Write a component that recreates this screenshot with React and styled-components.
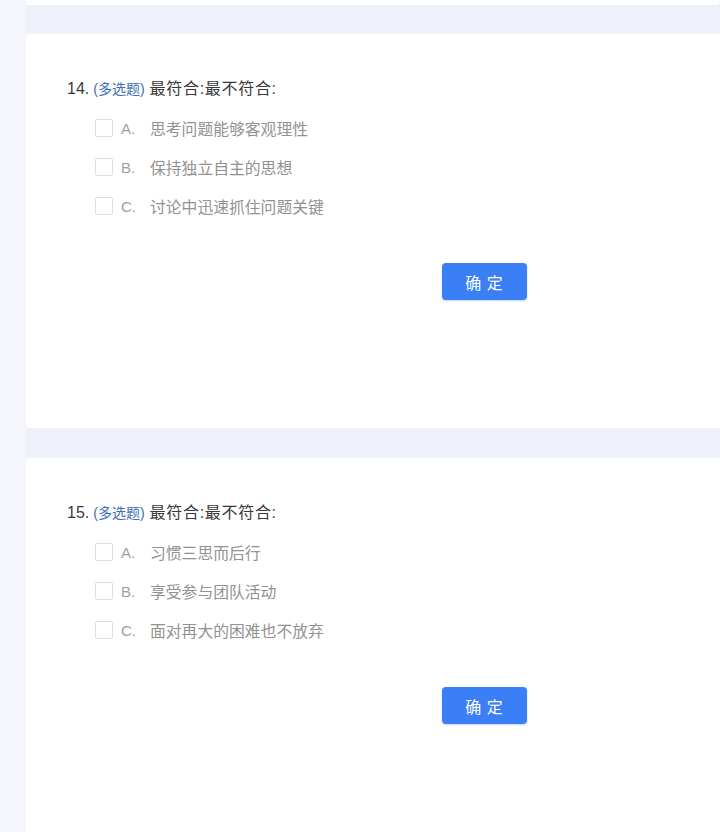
import React from "react";
import styled, { createGlobalStyle } from "styled-components";

const Global = createGlobalStyle`
  html, body { margin: 0; padding: 0; }
  body {
    background: #eef1fa;
    font-family: "Liberation Sans", "Noto Sans CJK SC", sans-serif;
    overflow: hidden;
  }
`;

const Page = styled.div`
  display: flex;
  min-height: 832px;
  height: 832px;
  overflow: hidden;
`;

const Gutter = styled.div`
  width: 26px;
  flex: none;
  background: #f4f6fb;
`;

const Column = styled.div`
  flex: 1;
  display: flex;
  flex-direction: column;
  gap: 30px;
  background: #eef1fa;
  min-width: 0;
`;

const Card = styled.section`
  background: #ffffff;
  border-radius: ${(p) => (p.$stub ? "0 0 4px 0" : "4px 0 0 4px")};
  height: ${(p) => p.$height}px;
  flex: none;
  box-sizing: border-box;
  padding: ${(p) => (p.$stub ? "0" : "43px 0 0 41px")};
  margin-bottom: ${(p) => p.$mb || 0}px;
`;

const Question = styled.div`
  display: flex;
  align-items: baseline;
  font-size: 16px;
  line-height: 24px;
  color: #3a3a3a;
`;

const Num = styled.span`
  margin-right: 4px;
`;

const Tag = styled.span`
  font-size: 14px;
  color: #3d6eb5;
  margin-right: 5px;
`;

const Title = styled.span`
  letter-spacing: 0.7px;
`;

const Options = styled.div`
  display: flex;
  flex-direction: column;
  gap: 19px;
  margin: 17px 0 0 28px;
`;

const Option = styled.label`
  display: flex;
  align-items: center;
  height: 20px;
`;

const Box = styled.span`
  width: 16px;
  height: 16px;
  border: 1px solid #dcdfe6;
  border-radius: 2px;
  box-sizing: content-box;
  background: #fff;
  margin-right: 8px;
  flex: none;
`;

const Letter = styled.span`
  width: 29px;
  font-size: 15px;
  color: #a0a0a0;
`;

const Text = styled.span`
  font-size: 15.8px;
  color: #929292;
`;

const ButtonRow = styled.div`
  display: flex;
  padding-left: 375px;
  margin-top: 47px;
`;

const Confirm = styled.button`
  width: 85px;
  height: 37px;
  border: none;
  border-radius: 4px;
  background: #3a7ff6;
  color: #fff;
  font-family: "Noto Sans CJK SC", sans-serif;
  font-size: 16px;
  letter-spacing: 1px;
  box-shadow: 0 1px 2px rgba(40, 90, 200, 0.25);
  cursor: pointer;
`;

const questions = [
  {
    n: "14.",
    opts: ["思考问题能够客观理性", "保持独立自主的思想", "讨论中迅速抓住问题关键"],
  },
  {
    n: "15.",
    opts: ["习惯三思而后行", "享受参与团队活动", "面对再大的困难也不放弃"],
  },
];

const letters = ["A.", "B.", "C."];

function QuestionCard({ q }) {
  return (
    <Card $height={394}>
      <Question>
        <Num>{q.n}</Num>
        <Tag>(多选题)</Tag>
        <Title>最符合:最不符合:</Title>
      </Question>
      <Options>
        {q.opts.map((o, i) => (
          <Option key={o}>
            <Box />
            <Letter>{letters[i]}</Letter>
            <Text>{o}</Text>
          </Option>
        ))}
      </Options>
      <ButtonRow>
        <Confirm>确 定</Confirm>
      </ButtonRow>
    </Card>
  );
}

export default function App() {
  return (
    <>
      <Global />
      <Page>
        <Gutter />
        <Column>
          <Card $stub $height={5} $mb={-1} />
          {questions.map((q) => (
            <QuestionCard key={q.n} q={q} />
          ))}
        </Column>
      </Page>
    </>
  );
}
